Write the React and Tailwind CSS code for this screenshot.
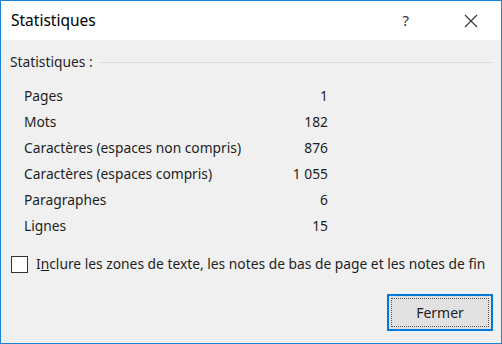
import React from 'react';

const rows = [
  { label: 'Pages', value: '1' },
  { label: 'Mots', value: '182' },
  { label: 'Caractères (espaces non compris)', value: '876' },
  { label: 'Caractères (espaces compris)', value: '1 055' },
  { label: 'Paragraphes', value: '6' },
  { label: 'Lignes', value: '15' },
];

const App = () => {
  return (
    <div
      className="w-[502px] h-[344px] flex flex-col border border-[#1883d7] bg-[#f0f0f0] text-[#1e1e1e] overflow-hidden"
      style={{ fontFamily: '"Noto Sans", "Open Sans", sans-serif' }}
    >
      {/* title bar */}
      <div className="h-[39px] bg-white flex items-center shrink-0">
        <span className="ml-[10px] text-[15.5px] text-black">Statistiques</span>
        <span className="ml-auto text-[15px] text-[#333] mr-[55px]">?</span>
        <svg width="14" height="14" viewBox="0 0 14 14" className="mr-[23px]">
          <path d="M1 1 L13 13 M13 1 L1 13" stroke="#333" strokeWidth="1.1" fill="none" />
        </svg>
      </div>

      {/* body */}
      <div className="flex flex-col flex-1 text-[13.8px]">
        <div className="h-[26px] mt-[9px] flex items-center ml-[9px] mr-[8px]">
          <span>Statistiques :</span>
          <div className="flex-1 h-px bg-[#dcdcdc] ml-[6px]"></div>
        </div>

        <div className="mt-[8px] ml-[23px] w-[304px] flex flex-col">
          {rows.map((r) => (
            <div key={r.label} className="h-[26px] flex items-center justify-between">
              <span>{r.label}</span>
              <span>{r.value}</span>
            </div>
          ))}
        </div>

        <div className="mt-[15px] h-[20px] flex items-center ml-[10px]">
          <div className="w-[17px] h-[17px] border border-[#333] bg-white shrink-0"></div>
          <span className="ml-[8px] whitespace-nowrap">
            I<span className="underline">n</span>clure les zones de texte, les notes de bas de page et les notes de fin
          </span>
        </div>

        <div className="mt-[20px] flex justify-end mr-[8px]">
          <button className="w-[106px] h-[37px] border-2 border-[#0078d7] bg-[#e1e1e1] p-[2px]">
            <div className="w-full h-full border border-dotted border-[#555] flex items-center justify-center text-[14px]">
              Fermer
            </div>
          </button>
        </div>
      </div>
    </div>
  );
};

export default App;
